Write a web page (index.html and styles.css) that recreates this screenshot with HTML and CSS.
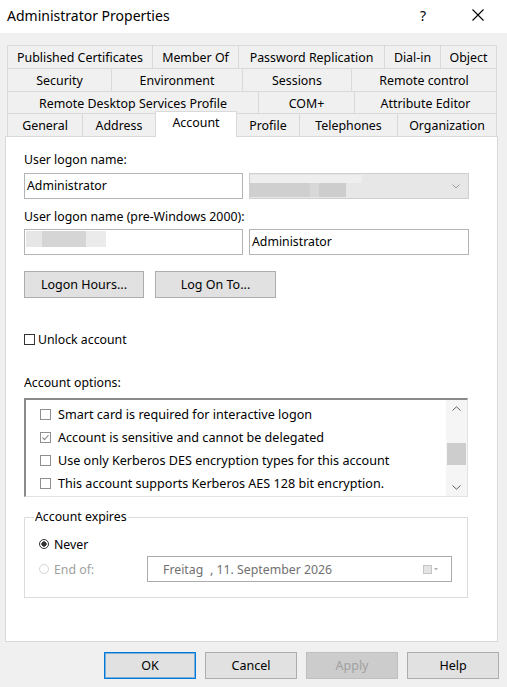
FILE: index.html
```html
<!DOCTYPE html>
<html lang="en">
<head>
<meta charset="utf-8">
<title>Administrator Properties</title>
<link rel="stylesheet" href="styles.css">
</head>
<body>
<div class="window">
  <header class="titlebar">
    <span class="title">Administrator Properties</span>
    <span class="caption-help">?</span>
    <span class="caption-close">
      <svg width="12" height="12" viewBox="0 0 12 12"><path d="M0.5 0.5 L11.5 11.5 M11.5 0.5 L0.5 11.5" stroke="#000" stroke-width="1.1" fill="none"/></svg>
    </span>
  </header>

  <nav class="tabs">
    <div class="tab-row row-1">
      <div class="tab">Published Certificates</div>
      <div class="tab">Member Of</div>
      <div class="tab">Password Replication</div>
      <div class="tab">Dial-in</div>
      <div class="tab">Object</div>
    </div>
    <div class="tab-row row-2">
      <div class="tab">Security</div>
      <div class="tab">Environment</div>
      <div class="tab">Sessions</div>
      <div class="tab">Remote control</div>
    </div>
    <div class="tab-row row-3">
      <div class="tab">Remote Desktop Services Profile</div>
      <div class="tab">COM+</div>
      <div class="tab">Attribute Editor</div>
    </div>
    <div class="tab-row row-4">
      <div class="tab">General</div>
      <div class="tab">Address</div>
      <div class="tab tab-active">Account</div>
      <div class="tab">Profile</div>
      <div class="tab">Telephones</div>
      <div class="tab">Organization</div>
    </div>
  </nav>

  <main class="panel">
    <div class="label first">User logon name:</div>
    <div class="field-row">
      <div class="field">Administrator</div>
      <div class="combo">
        <span class="smudge smudge-top"></span>
        <span class="smudge smudge-bottom"></span>
        <svg class="combo-arrow" width="8" height="5" viewBox="0 0 8 5"><path d="M0.5 0.5 L4 4 L7.5 0.5" stroke="#9a9a9a" fill="none"/></svg>
      </div>
    </div>

    <div class="label second">User logon name (pre-Windows 2000):</div>
    <div class="field-row tight">
      <div class="field"><span class="smudge smudge-domain"></span></div>
      <div class="field wide">Administrator</div>
    </div>

    <div class="button-row">
      <button class="btn btn-hours">Logon Hours...</button>
      <button class="btn btn-logon">Log On To...</button>
    </div>

    <label class="unlock">
      <span class="check dark"></span>
      <span>Unlock account</span>
    </label>

    <div class="label options">Account options:</div>
    <div class="listbox">
      <ul class="options-list">
        <li><span class="check soft"></span>Smart card is required for interactive logon</li>
        <li><span class="check soft"><svg width="9" height="9" viewBox="0 0 9 9"><path d="M1.5 4.5 L3.6 6.6 L7.5 2" stroke="#8a8a8a" stroke-width="1.1" fill="none"/></svg></span>Account is sensitive and cannot be delegated</li>
        <li><span class="check soft"></span>Use only Kerberos DES encryption types for this account</li>
        <li><span class="check soft"></span>This account supports Kerberos AES 128 bit encryption.</li>
      </ul>
      <div class="scrollbar">
        <div class="scroll-btn">
          <svg width="9" height="5" viewBox="0 0 9 5"><path d="M0.5 4.5 L4.5 0.8 L8.5 4.5" stroke="#606060" fill="none"/></svg>
        </div>
        <div class="scroll-track"><div class="scroll-thumb"></div></div>
        <div class="scroll-btn">
          <svg width="9" height="5" viewBox="0 0 9 5"><path d="M0.5 0.5 L4.5 4.2 L8.5 0.5" stroke="#606060" fill="none"/></svg>
        </div>
      </div>
    </div>

    <fieldset class="expires">
      <legend>Account expires</legend>
      <div class="radio-row">
        <span class="radio on"></span>
        <span>Never</span>
      </div>
      <div class="radio-row end-row">
        <span class="radio-label">
          <span class="radio off"></span>
          <span class="muted">End of:</span>
        </span>
        <div class="datepicker">
          <span class="day">Freitag</span>
          <span>, 11. September 2026</span>
          <span class="cal">
            <span class="cal-box"></span>
            <svg width="4" height="3" viewBox="0 0 4 3"><path d="M0 0 H4 L2 2.5 Z" fill="#b0b0b0"/></svg>
          </span>
        </div>
      </div>
    </fieldset>
  </main>

  <footer class="actions">
    <button class="btn action default">OK</button>
    <button class="btn action">Cancel</button>
    <button class="btn action disabled">Apply</button>
    <button class="btn action">Help</button>
  </footer>
</div>
</body>
</html>
```

FILE: styles.css
```css
* {
  box-sizing: border-box;
}

html, body {
  margin: 0;
  padding: 0;
}

body {
  width: 507px;
  height: 687px;
  overflow: hidden;
  background: #f0f0f0;
  font-family: "Noto Sans", "Open Sans", sans-serif;
  font-size: 12.3px;
  color: #000;
}

/* ---- caption bar ---- */
.titlebar {
  height: 33px;
  background: #fff;
  display: flex;
  align-items: center;
  padding: 0 0 3px 7px;
  font-size: 14px;
}

.title {
  flex: 1;
}

.caption-help {
  width: 34px;
  text-align: center;
  font-size: 14px;
}

.caption-close {
  width: 59px;
  margin-left: 8px;
  display: flex;
  justify-content: center;
  align-items: center;
}

/* ---- tab strip ---- */
.tabs {
  margin: 12px 0 0 7px;
  width: 490px;
}

.tab-row {
  display: grid;
  height: 23px;
}

.row-1 { grid-template-columns: 145px 86px 146px 56px 57px; }
.row-2 { grid-template-columns: 104px 131px 109px 146px; }
.row-3 { grid-template-columns: 251px 96px 143px; height: 22px; }
.row-4 { grid-template-columns: 75px 73px 81px 63px 98px 100px; }

.tab {
  border: 1px solid #d9d9d9;
  border-bottom: none;
  margin-right: -1px;
  display: flex;
  align-items: center;
  justify-content: center;
  white-space: nowrap;
  font-size: 12.4px;
  padding-top: 1px;
}

.tab:last-child {
  margin-right: 0;
}

.tab-active {
  background: #fff;
  margin-top: -2px;
  margin-bottom: -1px;
  padding-top: 0;
  padding-bottom: 4px;
  position: relative;
  z-index: 1;
}

/* ---- page body ---- */
.panel {
  margin-left: 5px;
  width: 493px;
  height: 506px;
  background: #fff;
  border: 1px solid #d9d9d9;
  padding: 15px 0 0 18px;
}

.label {
  height: 16px;
  line-height: 16px;
}

.label.second { margin-top: 10px; }
.label.options { margin-top: 28px; }

.field-row {
  display: flex;
  gap: 6px;
  margin-top: 5px;
}

.field-row.tight {
  margin-top: 4px;
}

.field {
  position: relative;
  width: 219px;
  height: 26px;
  border: 1px solid #b4b4b4;
  background: #fff;
  padding-left: 2px;
  line-height: 24px;
  white-space: nowrap;
}

.field.wide {
  width: 220px;
}

.combo {
  position: relative;
  width: 220px;
  height: 26px;
  border: 1px solid #cfcfcf;
  background: #e7e7e7;
}

.combo-arrow {
  position: absolute;
  right: 8px;
  top: 10px;
}

/* blurred, unreadable values */
.smudge {
  position: absolute;
  display: block;
}

.smudge-top {
  left: 0;
  top: 1px;
  width: 112px;
  height: 8px;
  background: #eeeeee;
}

.smudge-bottom {
  left: 0;
  top: 9px;
  width: 96px;
  height: 14px;
  background: linear-gradient(90deg, #cfcfcf 0 62%, #d8d8d8 62% 72%, #cdcdcd 72% 100%);
}

.smudge-domain {
  left: 1px;
  top: 1px;
  width: 80px;
  height: 16px;
  background: linear-gradient(90deg, #e6e6e6 0 20%, #d5d5d5 20% 75%, #ebebeb 75% 100%);
}

.button-row {
  display: flex;
  gap: 11px;
  margin-top: 16px;
}

.btn {
  height: 27px;
  background: #e1e1e1;
  border: 1px solid #adadad;
  font-family: inherit;
  font-size: 12.5px;
  color: #000;
  padding: 0;
}

.btn-hours { width: 120px; }
.btn-logon { width: 121px; }

.unlock {
  display: flex;
  align-items: center;
  gap: 3px;
  height: 16px;
  margin-top: 33px;
}

.check {
  width: 11px;
  height: 11px;
  flex: none;
  border: 1px solid #333;
  background: #fff;
  display: flex;
  align-items: center;
  justify-content: center;
}

.check.soft {
  border-color: #8f8f8f;
}

/* ---- options list ---- */
.listbox {
  margin-top: 7px;
  width: 444px;
  height: 99px;
  display: flex;
  border-style: solid;
  border-width: 2px 1px 1px 2px;
  border-color: #8a8a8a #e3e3e3 #e3e3e3 #8a8a8a;
  background: #fff;
}

.options-list {
  flex: 1;
  list-style: none;
  margin: 0;
  padding: 3px 0 0 14px;
  font-size: 12.6px;
}

.options-list li {
  height: 23px;
  display: flex;
  align-items: center;
  gap: 7px;
  white-space: nowrap;
}

.scrollbar {
  width: 21px;
  display: flex;
  flex-direction: column;
  background: #f5f5f5;
}

.scroll-btn {
  height: 17px;
  display: flex;
  align-items: center;
  justify-content: center;
}

.scroll-track {
  flex: 1;
}

.scroll-thumb {
  margin: 26px 1px 0 1px;
  height: 22px;
  background: #cdcdcd;
}

/* ---- account expires group ---- */
.expires {
  margin: 12px 0 0 0;
  padding: 0 0 15px 0;
  width: 444px;
  min-width: 0;
  border: 1px solid #dcdcdc;
}

.expires legend {
  margin-left: 9px;
  padding: 0 1px;
  line-height: 16px;
}

.radio-row {
  display: flex;
  align-items: center;
  height: 16px;
  margin-top: 11px;
  padding-left: 14px;
  gap: 5px;
}

.end-row {
  height: 26px;
  margin-top: 4px;
  gap: 0;
}

.radio-label {
  width: 108px;
  display: flex;
  align-items: center;
  gap: 5px;
}

.radio {
  width: 10px;
  height: 10px;
  flex: none;
  border-radius: 50%;
  border: 1px solid #333;
  background: #fff;
}

.radio.on {
  background: radial-gradient(circle, #333 0 2.4px, #fff 2.9px);
}

.radio.off {
  border-color: #d6d6d6;
}

.muted {
  color: #a0a0a0;
}

.datepicker {
  width: 305px;
  height: 26px;
  border: 1px solid #ababab;
  display: flex;
  align-items: center;
  padding-left: 15px;
  color: #707070;
  white-space: nowrap;
}

.day {
  width: 47px;
}

.cal {
  margin-left: auto;
  margin-right: 13px;
  display: flex;
  align-items: center;
  gap: 2px;
}

.cal-box {
  width: 9px;
  height: 9px;
  border: 1px solid #c4c4c4;
  background: #e4e4e4;
}

/* ---- dialog buttons ---- */
.actions {
  display: flex;
  justify-content: flex-end;
  gap: 9px;
  margin-top: 10px;
  padding-right: 8px;
}

.action {
  width: 92px;
}

.action.default {
  border-color: #0078d7;
  box-shadow: inset 0 0 0 1px rgba(0, 120, 215, 0.45);
}

.action.disabled {
  background: #cccccc;
  border-color: #bfbfbf;
  color: #a0a0a0;
}
```
